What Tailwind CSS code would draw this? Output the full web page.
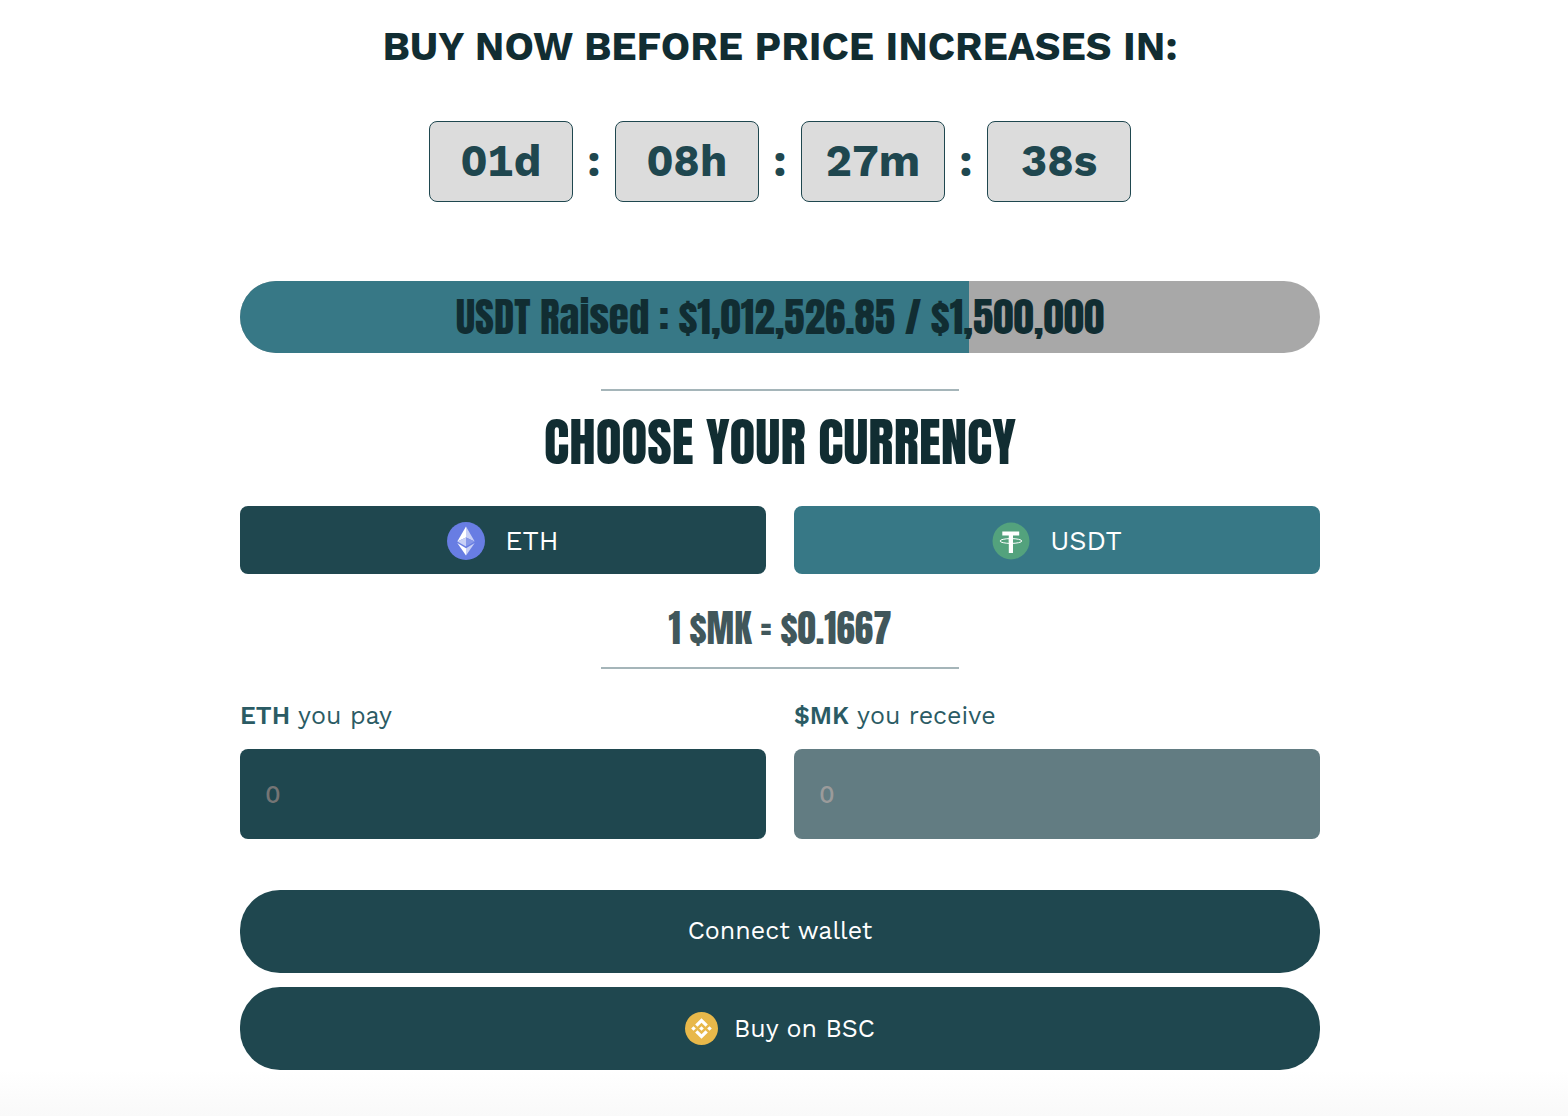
<!DOCTYPE html>
<html lang="en">
<head>
<meta charset="utf-8">
<meta name="viewport" content="width=device-width, initial-scale=1">
<title>Presale</title>
<script src="https://cdn.jsdelivr.net/npm/@tailwindcss/browser@4"></script>
</head>
<body class="flex min-h-screen flex-col bg-white pr-2 font-['Work_Sans','Inter',sans-serif] text-[#1f474f]">
<main class="mx-auto w-full max-w-[1080px] pt-6">
  <h1 class="text-center text-[40px] leading-[46px] font-bold text-[#112d32]">BUY NOW BEFORE PRICE INCREASES IN:</h1>

  <div class="mt-[51px] flex items-center justify-center text-[44px] leading-[79px] font-bold tabular-nums" role="timer">
    <div class="w-36 rounded-lg border border-[#1f474f] bg-[#dcdcdc] text-center">01d</div>
    <span class="w-[42px] text-center">:</span>
    <div class="w-36 rounded-lg border border-[#1f474f] bg-[#dcdcdc] text-center">08h</div>
    <span class="w-[42px] text-center">:</span>
    <div class="w-36 rounded-lg border border-[#1f474f] bg-[#dcdcdc] text-center">27m</div>
    <span class="w-[42px] text-center">:</span>
    <div class="w-36 rounded-lg border border-[#1f474f] bg-[#dcdcdc] text-center">38s</div>
  </div>

  <div class="relative mt-[79px] h-[72px] overflow-hidden rounded-full bg-[#a8a8a8]">
    <div class="h-full bg-[#377886]" style="width:67.5%"></div>
    <p class="absolute inset-0 text-center font-['Impact','Anton',sans-serif] text-[41px] leading-[72px] text-[#112d32]">USDT Raised : $1,012,526.85 / $1,500,000</p>
  </div>

  <hr class="mx-auto mt-9 w-[358px] border-t-2 border-[#a5b5b9]">
  <h2 class="mt-5 text-center font-['Impact','Anton',sans-serif] text-[53px] leading-[62px] text-[#112d32]">CHOOSE YOUR CURRENCY</h2>

  <div class="mt-[33px] grid grid-cols-2 gap-7 text-[27px] text-white">
    <button type="button" class="flex h-[68px] items-center justify-center gap-5 rounded-lg bg-[#1f474f] pt-0.5">
      <svg class="size-[38px]" viewBox="0 0 38 38" aria-hidden="true">
        <circle cx="19" cy="19" r="19" fill="#687de3"/>
        <path d="M19 4.500 10.300 19.400 19 15.400Z" fill="#fff"/>
        <path d="M19 4.500 27.700 19.400 19 15.400Z" fill="#c8d0f6"/>
        <path d="M19 15.400 10.300 19.400 19 24.500Z" fill="#c8d0f6"/>
        <path d="M19 15.400 27.700 19.400 19 24.500Z" fill="#8697e9"/>
        <path d="M10.300 21.100 19 26.200V33.500Z" fill="#fff"/>
        <path d="M27.700 21.100 19 26.200V33.500Z" fill="#c8d0f6"/>
      </svg>
      <span>ETH</span>
    </button>
    <button type="button" class="flex h-[68px] items-center justify-center gap-5 rounded-lg bg-[#377886] pt-0.5">
      <svg class="size-[38px]" viewBox="0 0 38 38" aria-hidden="true">
        <circle cx="19" cy="19" r="18.500" fill="#53a27d"/>
        <path d="M10.300 9.500H27.200V13.600H21V31H16.800V13.600H10.300Z" fill="#fff"/>
        <ellipse cx="18.900" cy="19" rx="10.900" ry="2.400" fill="none" stroke="#fff" stroke-width="1"/>
        <path d="M16.800 15.500H21V20.300H16.800Z" fill="#fff"/>
      </svg>
      <span>USDT</span>
    </button>
  </div>

  <p class="mt-8 text-center font-['Impact','Anton',sans-serif] text-[37px] leading-[44px] text-[#41575b]">1 $MK = $0.1667</p>
  <hr class="mx-auto mt-[17px] w-[358px] border-t-2 border-[#a5b5b9]">

  <div class="mt-[31px] grid grid-cols-2 gap-7 text-[25px] leading-8 text-[#2b5b64]">
    <div>
      <label for="pay" class="block"><b class="font-semibold">ETH</b> you pay</label>
      <input id="pay" type="text" inputmode="decimal" placeholder="0" class="mt-[17px] block h-[90px] w-full rounded-lg bg-[#1f474f] px-[25px] font-medium text-white placeholder:text-[#757575]">
    </div>
    <div>
      <label for="receive" class="block"><b class="font-semibold">$MK</b> you receive</label>
      <input id="receive" type="text" placeholder="0" disabled class="mt-[17px] block h-[90px] w-full rounded-lg bg-[#627c82] px-[25px] font-medium text-white placeholder:text-[#9b9b9b]">
    </div>
  </div>

  <div class="mt-[51px] grid gap-3.5 text-[25px] text-white">
    <button type="button" class="h-[83px] rounded-[40px] bg-[#1f474f] pb-0.5">Connect wallet</button>
    <button type="button" class="flex h-[83px] items-center justify-center gap-4 rounded-[40px] bg-[#1f474f]">
      <svg class="size-[33px]" viewBox="0 0 32 32" aria-hidden="true">
        <circle cx="16" cy="16" r="16" fill="#e8b84a"/>
        <path fill="#fff" d="M12.116 14.404 16 10.520l3.886 3.886 2.260-2.260L16 6l-6.144 6.144 2.260 2.260ZM6 16l2.260-2.260L10.520 16l-2.260 2.260L6 16Zm6.116 1.596L16 21.480l3.886-3.886 2.260 2.259L16 26l-6.144-6.144 2.260-2.260ZM21.480 16l2.260-2.260L26 16l-2.260 2.260L21.480 16Zm-3.188-.002L16 18.294 13.706 16 16 13.706l2.292 2.292Z"/>
      </svg>
      <span>Buy on BSC</span>
    </button>
  </div>
</main>
<div class="-mr-2 min-h-[46px] flex-1 bg-linear-to-b from-white to-[#f9f9f9]"></div>
</body>
</html>
